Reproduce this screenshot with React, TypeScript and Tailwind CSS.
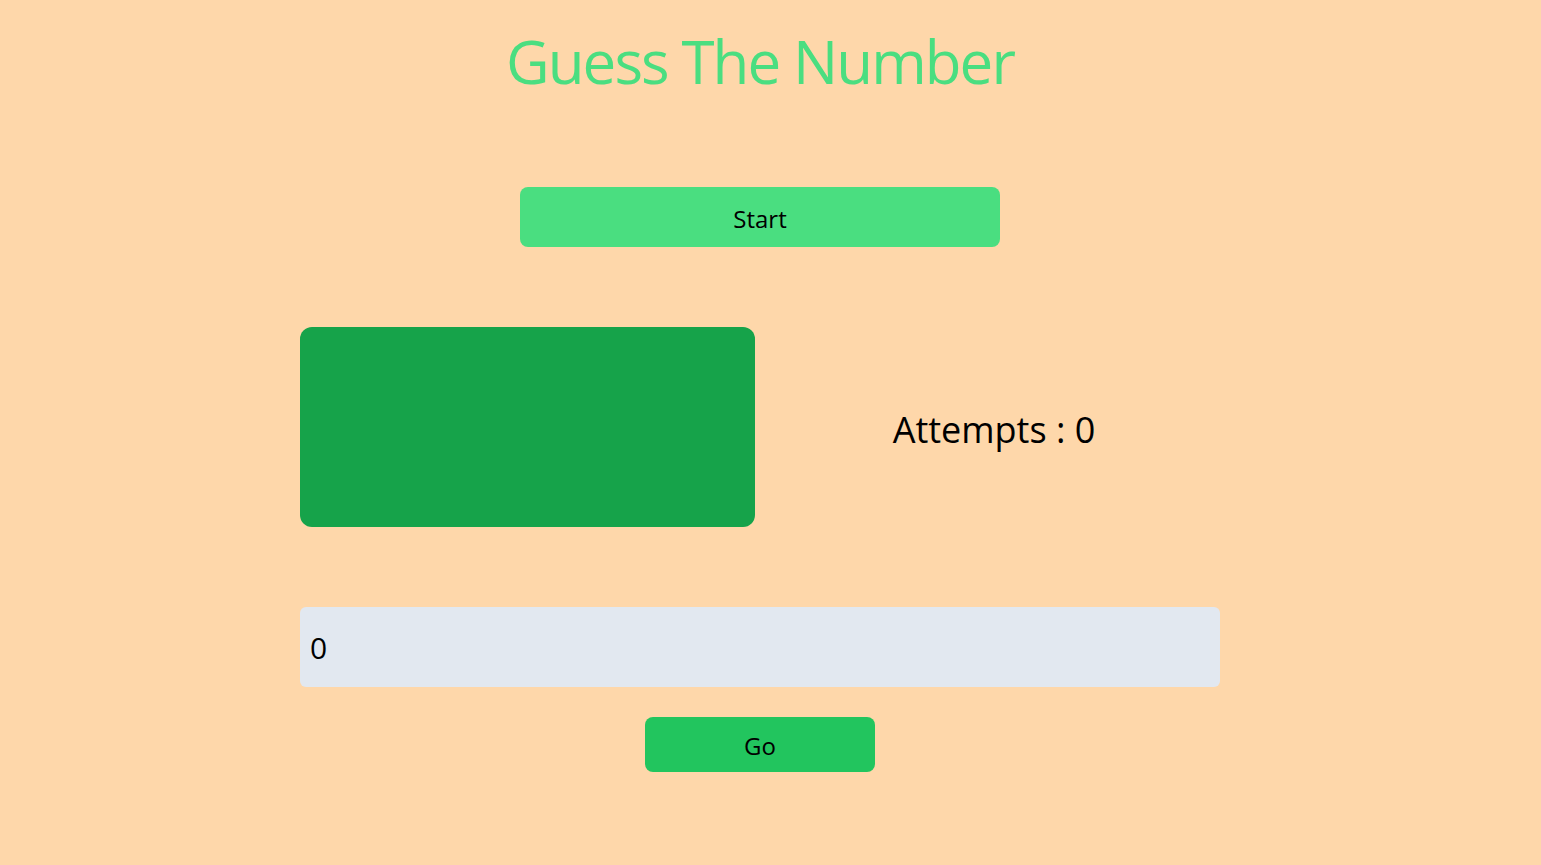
import { useState } from "react";

function App() {
  const [guess, setGuess] = useState("0");
  const [attempts] = useState(0);

  return (
    <div className="min-h-screen w-full bg-[#fed7aa] font-['Open_Sans',sans-serif]">
      <div className="flex w-[1520px] flex-col items-center pt-[31px]">
        <h1 className="text-6xl tracking-[-1.9px] text-[#4ade80]">
          Guess The Number
        </h1>

        <button className="mt-[96px] h-[60px] w-[480px] rounded-lg bg-[#4ade80] pt-1 text-2xl text-black">
          Start
        </button>

        <div className="mt-[80px] grid w-[920px] grid-cols-2 items-center">
          <div className="h-[200px] w-[455px] rounded-xl bg-[#16a34a]"></div>
          <p className="pt-1.5 pl-2 text-center text-4xl text-black">
            Attempts : {attempts}
          </p>
        </div>

        <input
          type="number"
          value={guess}
          onChange={(e) => setGuess(e.target.value)}
          className="mt-[80px] h-[80px] w-[920px] rounded-md bg-[#e2e8f0] px-2.5 text-3xl text-black outline-none"
        />

        <button className="mt-[30px] h-[55px] w-[230px] rounded-lg bg-[#22c55e] pt-0.5 text-2xl text-black">
          Go
        </button>
      </div>
    </div>
  );
}

export default App;
